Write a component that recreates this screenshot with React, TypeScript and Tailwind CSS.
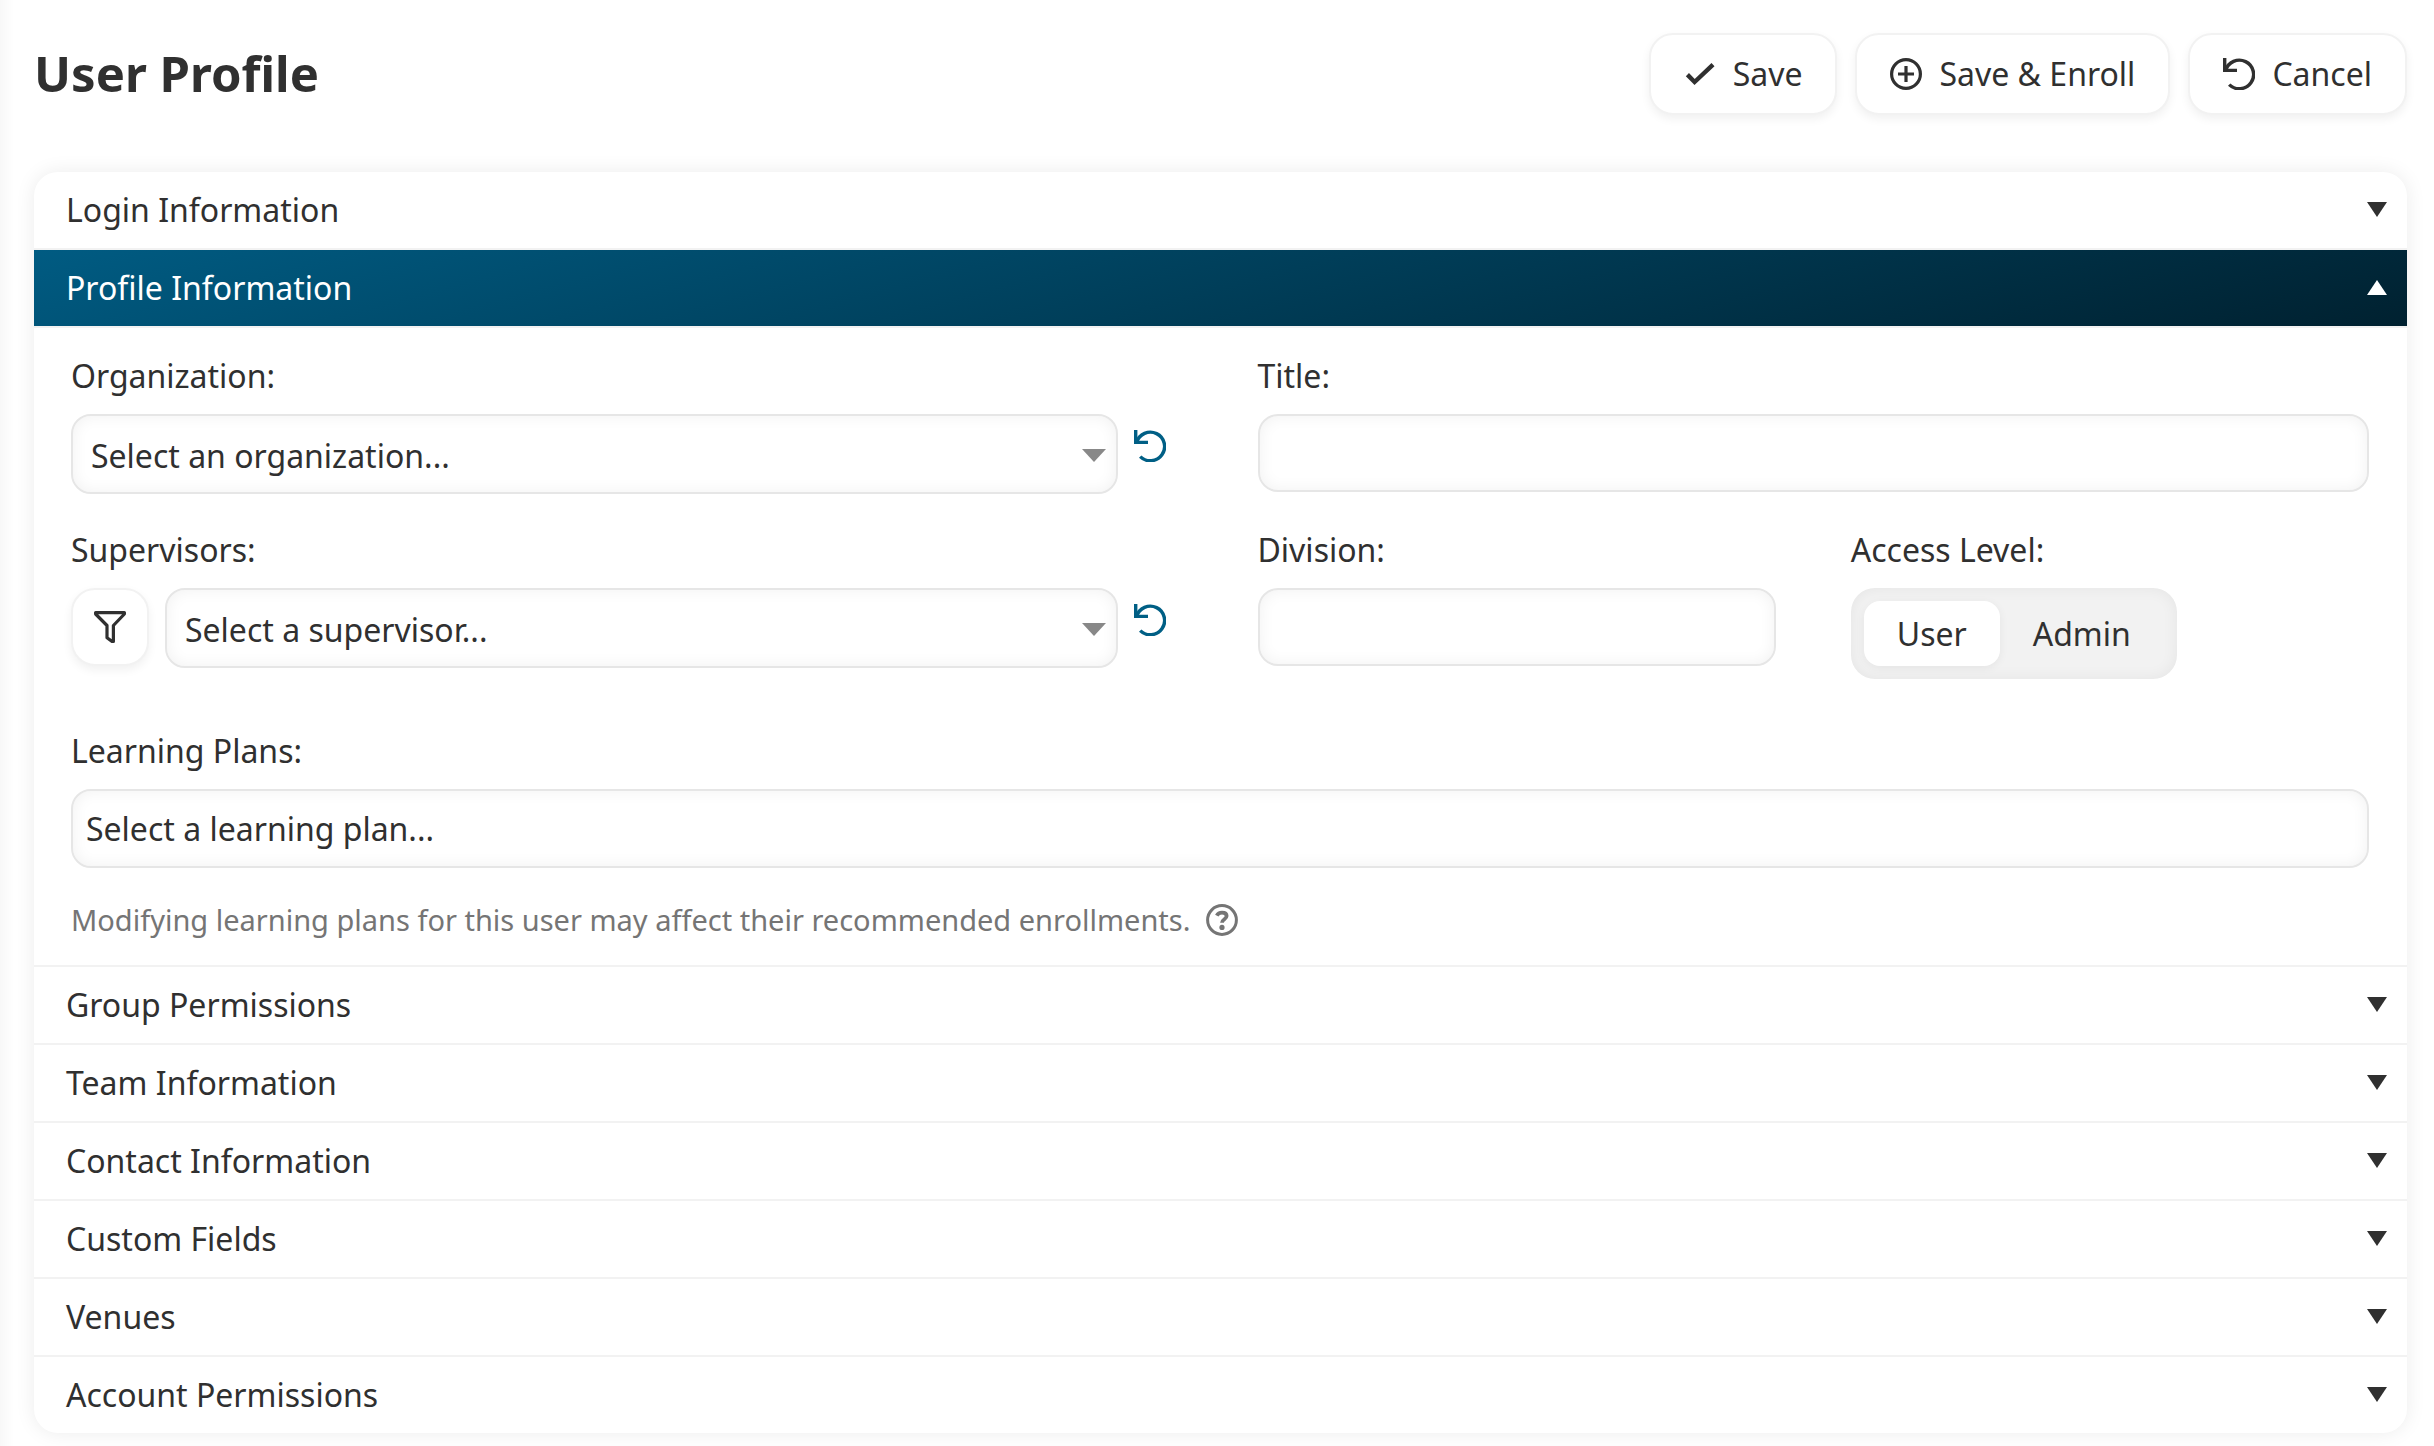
import { useState } from "react";
import type { ReactNode } from "react";
import clsx from "clsx";

const fieldStyle =
  "w-full rounded-[20px] border-2 border-[#e6e6e6] bg-white text-[#303030] shadow-[inset_0_0_16px_rgba(0,0,0,0.06)] outline-none placeholder:text-[#303030] placeholder:opacity-100";

const UndoIcon = () => (
  <svg viewBox="0 0 32 32" fill="none" stroke="currentColor" strokeWidth="3.4" className="size-8" aria-hidden="true">
    <path d="M1.7 0v12.4H14" />
    <path d="M2.6 12.4A14.3 14.3 0 1 1 6.2 26.6" />
  </svg>
);

const CheckIcon = () => (
  <svg viewBox="0 0 32 24" fill="none" stroke="currentColor" strokeWidth="4.4" className="h-6 w-8" aria-hidden="true">
    <path d="M3.4 12.6l7.2 7.4L29 2.6" />
  </svg>
);

const PlusIcon = () => (
  <svg viewBox="0 0 32 32" fill="none" stroke="currentColor" strokeWidth="3.2" className="size-8" aria-hidden="true">
    <circle cx="16" cy="16" r="14.4" />
    <path d="M16 8v16M8 16h16" />
  </svg>
);

const FilterIcon = () => (
  <svg viewBox="0 0 32 32" fill="none" stroke="currentColor" strokeWidth="3.2" strokeLinejoin="round" className="size-8" aria-hidden="true">
    <path d="M1.6 1.6h28.8V3l-11 11.5v15.9H18l-5-3.6V14.500L1.6 3z" />
  </svg>
);

const HelpIcon = () => (
  <svg viewBox="0 0 32 32" fill="none" stroke="currentColor" className="size-8" aria-hidden="true">
    <circle cx="16" cy="16" r="14.4" strokeWidth="3" />
    <path d="M10.8 11.6c1-2 2.8-3 5.2-3 2.8 0 4.6 1.4 4.6 3.5 0 3.2-4.6 3.1-4.6 6.7" strokeWidth="3.8" />
    <circle cx="16" cy="23.4" r="2.6" fill="currentColor" stroke="none" />
  </svg>
);

const Triangle = ({ up }: { up: boolean }) => (
  <svg viewBox="0 0 20 16" fill="currentColor" className="h-4 w-5" aria-hidden="true">
    <path d={up ? "M0 15L10 0l10 15z" : "M0 0h20L10 15z"} />
  </svg>
);

const ActionButton = ({ icon, children }: { icon: ReactNode; children: ReactNode }) => (
  <button
    type="button"
    className="flex h-[82px] items-center gap-[17px] rounded-3xl border-2 border-[#f2f2f2] bg-white px-[33px] shadow-[0_4px_10px_rgba(0,0,0,0.06)]">
    {icon}
    {children}
  </button>
);

const SelectField = ({ id, placeholder }: { id: string; placeholder: string }) => (
  <div className="relative min-w-0 flex-1">
    <select id={id} className={clsx(fieldStyle, "h-20 appearance-none pt-1 pr-14 pl-[18px]")}>
      <option>{placeholder}</option>
    </select>
    <svg viewBox="0 0 24 13" className="pointer-events-none absolute top-[35px] right-3 h-[13px] w-6 fill-[#888888]" aria-hidden="true">
      <path d="M0 0h24L12 13z" />
    </svg>
  </div>
);

const ResetButton = ({ label }: { label: string }) => (
  <button type="button" aria-label={label} className="mt-4 mr-[17px] ml-4 text-[#005f85]">
    <UndoIcon />
  </button>
);

const AccessLevel = () => {
  const [level, setLevel] = useState("User");

  return (
    <fieldset>
      <legend className="mb-4">Access Level:</legend>
      <div className="inline-flex h-[91px] rounded-3xl bg-[#f2f2f2] p-[13px] shadow-[inset_0_0_16px_rgba(0,0,0,0.06)]">
        {["User", "Admin"].map((item) => (
          <label
            key={item}
            className={clsx(
              "flex items-center rounded-2xl px-[33px]",
              level === item && "bg-white shadow-[0_2px_10px_rgba(0,0,0,0.06)]",
            )}>
            <input
              type="radio"
              name="access-level"
              value={item}
              checked={level === item}
              onChange={() => setLevel(item)}
              className="sr-only"
            />
            {item}
          </label>
        ))}
      </div>
    </fieldset>
  );
};

const ProfileForm = () => (
  <div className="pt-[26px] pr-[38px] pb-[25px] pl-[37px]">
    <div className="grid grid-cols-4 gap-x-[75px] gap-y-[34px]">
      <div className="col-span-2">
        <label htmlFor="organization" className="mb-4 block">
          Organization:
        </label>
        <div className="flex items-start">
          <SelectField id="organization" placeholder="Select an organization..." />
          <ResetButton label="Reset organization" />
        </div>
      </div>
      <div className="col-span-2">
        <label htmlFor="title" className="mb-4 block">
          Title:
        </label>
        <input id="title" type="text" className={clsx(fieldStyle, "h-[78px] px-3")} />
      </div>
      <div className="col-span-2">
        <label htmlFor="supervisors" className="mb-4 block">
          Supervisors:
        </label>
        <div className="flex items-start">
          <button
            type="button"
            aria-label="Filter supervisors"
            className="mr-4 flex size-[78px] items-center justify-center rounded-3xl border-2 border-[#f2f2f2] bg-white shadow-[0_4px_10px_rgba(0,0,0,0.06)]">
            <FilterIcon />
          </button>
          <SelectField id="supervisors" placeholder="Select a supervisor..." />
          <ResetButton label="Reset supervisors" />
        </div>
      </div>
      <div>
        <label htmlFor="division" className="mb-4 block">
          Division:
        </label>
        <input id="division" type="text" className={clsx(fieldStyle, "h-[78px] px-3")} />
      </div>
      <AccessLevel />
    </div>
    <div className="mt-[50px]">
      <label htmlFor="learning-plans" className="mb-4 block">
        Learning Plans:
      </label>
      <input id="learning-plans" type="text" placeholder="Select a learning plan..." className={clsx(fieldStyle, "h-[79px] px-[13px]")} />
    </div>
    <div className="mt-8 flex items-center gap-4 text-[29px] leading-10 text-[#757575]">
      <p>Modifying learning plans for this user may affect their recommended enrollments.</p>
      <button type="button" aria-label="About learning plans">
        <HelpIcon />
      </button>
    </div>
  </div>
);

const sections = [
  "Login Information",
  "Profile Information",
  "Group Permissions",
  "Team Information",
  "Contact Information",
  "Custom Fields",
  "Venues",
  "Account Permissions",
];

const App = () => {
  const [open, setOpen] = useState("Profile Information");

  return (
    <main className="min-h-screen bg-[linear-gradient(to_right,#f8f8f8,#ffffff_14px)] pt-[33px] pr-[27px] pb-3 pl-[34px] font-['Noto_Sans',sans-serif] text-[32px] leading-[44px] text-[#303030]">
      <header className="mb-[57px] flex items-center justify-between">
        <h1 className="pb-0.5 text-[49px] leading-[60px] font-bold">User Profile</h1>
        <div className="flex gap-[18px]">
          <ActionButton icon={<CheckIcon />}>Save</ActionButton>
          <ActionButton icon={<PlusIcon />}>Save &amp; Enroll</ActionButton>
          <ActionButton icon={<UndoIcon />}>Cancel</ActionButton>
        </div>
      </header>
      <div className="divide-y-2 divide-[#f2f2f2] overflow-hidden rounded-3xl bg-white shadow-[0_0_20px_rgba(0,0,0,0.08)]">
        {sections.map((name) => {
          const isOpen = open === name;
          return (
            <section key={name} className="divide-y-2 divide-[#f2f2f2]">
              <h2>
                <button
                  type="button"
                  aria-expanded={isOpen}
                  onClick={() => setOpen(isOpen ? "" : name)}
                  className={clsx(
                    "flex h-[76px] w-full items-center justify-between pr-5 pl-8",
                    isOpen && "bg-linear-[165deg,#005b82,#002130] text-white",
                  )}>
                  {name}
                  <Triangle up={isOpen} />
                </button>
              </h2>
              {isOpen && name === "Profile Information" && <ProfileForm />}
            </section>
          );
        })}
      </div>
    </main>
  );
};

export default App;
